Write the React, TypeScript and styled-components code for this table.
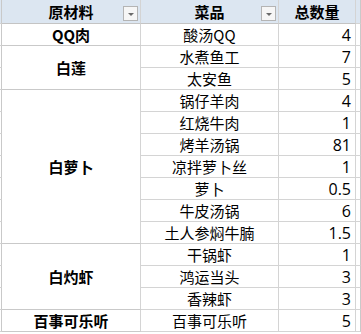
import { Fragment } from "react";
import styled, { createGlobalStyle } from "styled-components";

const GlobalStyle = createGlobalStyle`
  body {
    margin: 0;
    background: #ffffff;
    font-family: "Noto Sans CJK SC", "Noto Sans", sans-serif;
    color: #000;
  }
`;

const Sheet = styled.div`
  display: grid;
  grid-template-columns: 2px 139px 138px 77px 5px;
  grid-template-rows: 24px repeat(14, 22px);
  width: 361px;
`;

const Gutter = styled.div<{ $head?: boolean }>`
  box-sizing: border-box;
  border-right: 1px solid #c9c9c9;
  border-bottom: 1px solid #d4d4d4;
  background: ${(p) => (p.$head ? "#dce6f1" : "#fff")};
`;

const HeaderCell = styled.div`
  box-sizing: border-box;
  display: flex;
  align-items: center;
  justify-content: center;
  position: relative;
  background: #dce6f1;
  border-right: 1px solid #d4d4d4;
  border-bottom: 1px solid #c4c4c4;
  font-size: 15px;
  font-weight: bold;
`;

const FilterButton = styled.span`
  position: absolute;
  right: 2px;
  top: 6px;
  width: 15px;
  height: 15px;
  box-sizing: border-box;
  border: 1px solid #b4b4b4;
  background: #f6f6f6;
  display: flex;
  align-items: center;
  justify-content: center;

  &::after {
    content: "";
    border-left: 3px solid transparent;
    border-right: 3px solid transparent;
    border-top: 3px solid #6a6a6a;
    margin-top: 1px;
  }
`;

const GroupCell = styled.div<{ $span: number }>`
  box-sizing: border-box;
  grid-row: span ${(p) => p.$span};
  display: flex;
  align-items: center;
  justify-content: center;
  border-right: 1px solid #d4d4d4;
  border-bottom: 1px solid #c9c9c9;
  font-size: 15px;
  font-weight: bold;
`;

const Cell = styled.div<{ $align: "center" | "right" }>`
  box-sizing: border-box;
  display: flex;
  align-items: center;
  justify-content: ${(p) => (p.$align === "right" ? "flex-end" : "center")};
  padding-right: ${(p) => (p.$align === "right" ? "4px" : "0")};
  border-right: 1px solid #d4d4d4;
  border-bottom: 1px solid #d4d4d4;
  font-size: ${(p) => (p.$align === "right" ? "16px" : "15px")};
  font-family: ${(p) =>
    p.$align === "right"
      ? '"Open Sans", "Noto Sans", sans-serif'
      : '"Noto Sans CJK SC", "Noto Sans", sans-serif'};
  white-space: nowrap;
`;

const groups = [
  { name: "QQ肉", items: [["酸汤QQ", "4"]] },
  { name: "白莲", items: [["水煮鱼工", "7"], ["太安鱼", "5"]] },
  {
    name: "白萝卜",
    items: [
      ["锅仔羊肉", "4"],
      ["红烧牛肉", "1"],
      ["烤羊汤锅", "81"],
      ["凉拌萝卜丝", "1"],
      ["萝卜", "0.5"],
      ["牛皮汤锅", "6"],
      ["土人参焖牛腩", "1.5"],
    ],
  },
  { name: "白灼虾", items: [["干锅虾", "1"], ["鸿运当头", "3"], ["香辣虾", "3"]] },
  { name: "百事可乐听", items: [["百事可乐听", "5"]] },
];

const App = () => {
  return (
    <>
      <GlobalStyle />
      <Sheet>
        <Gutter $head />
        <HeaderCell>
          原材料
          <FilterButton />
        </HeaderCell>
        <HeaderCell>
          菜品
          <FilterButton />
        </HeaderCell>
        <HeaderCell>总数量</HeaderCell>
        <Gutter $head />
        {groups.map((g) =>
          g.items.map(([dish, qty], i) => (
            <Fragment key={g.name + dish}>
              <Gutter />
              {i === 0 && <GroupCell $span={g.items.length}>{g.name}</GroupCell>}
              <Cell $align="center">{dish}</Cell>
              <Cell $align="right">{qty}</Cell>
              <Gutter />
            </Fragment>
          ))
        )}
      </Sheet>
    </>
  );
};

export default App;
